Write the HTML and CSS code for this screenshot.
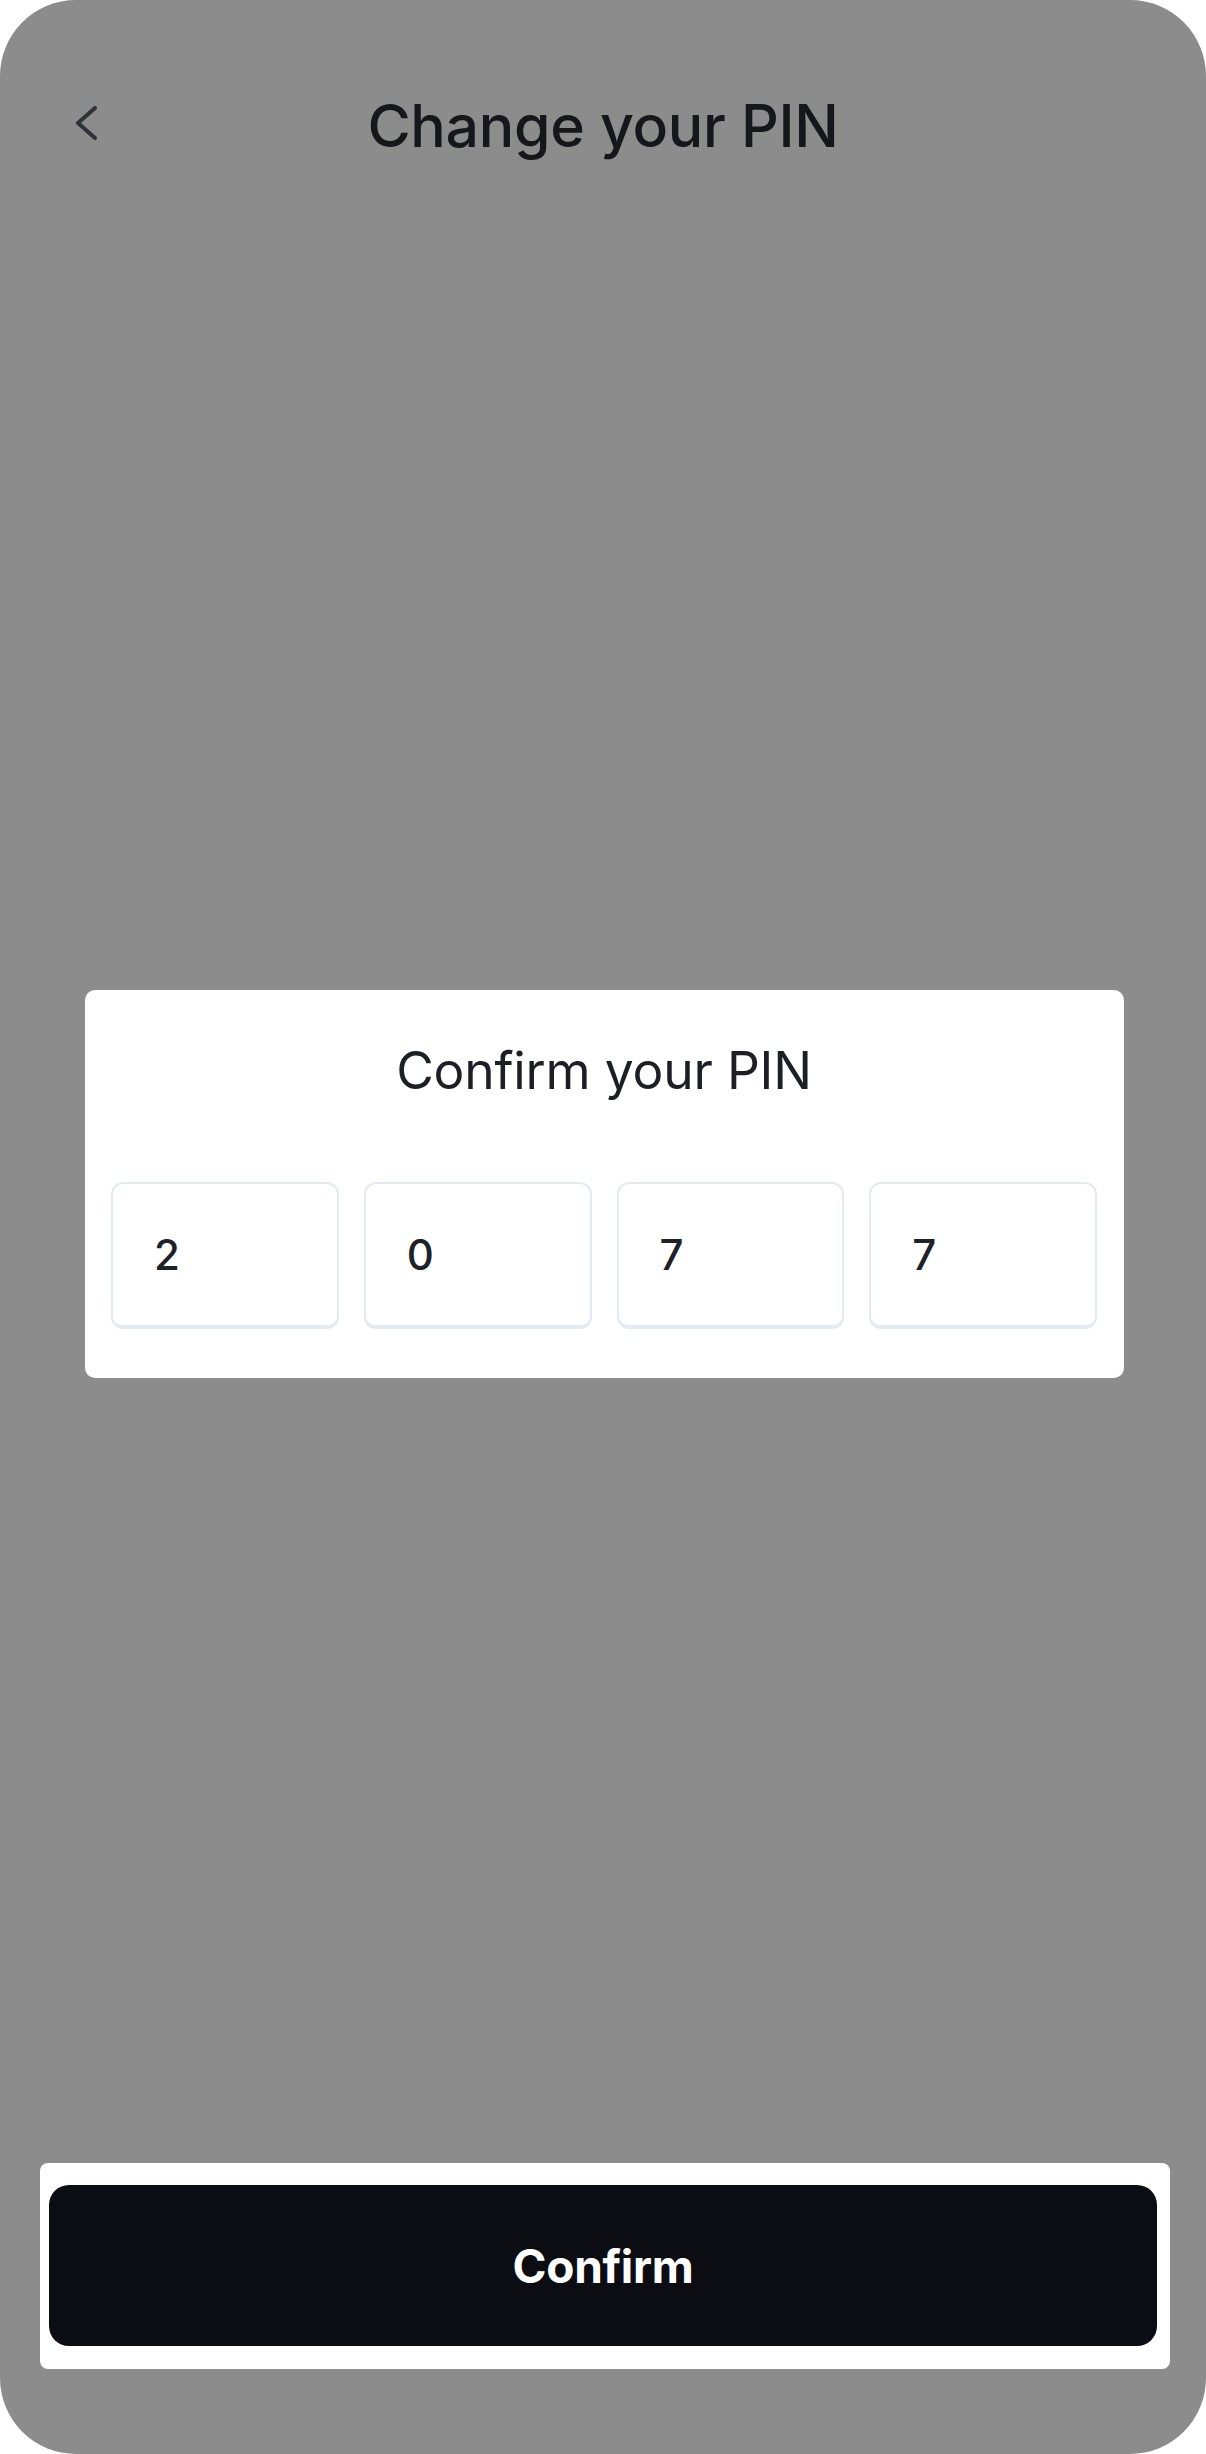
FILE: index.html
```html
<!DOCTYPE html>
<html lang="en">
<head>
<meta charset="utf-8">
<title>Change your PIN</title>
<link rel="stylesheet" href="styles.css">
</head>
<body>
<div class="screen">
  <header class="header">
    <div class="back">
      <svg class="back-icon" width="22" height="34" viewBox="0 0 22 34" aria-hidden="true">
        <polyline points="19,2 2,17 19,32" fill="none" stroke="#2f3337" stroke-width="4" stroke-linecap="round" stroke-linejoin="round"/>
      </svg>
    </div>
    <h1 class="title">Change your PIN</h1>
    <div></div>
  </header>

  <section class="card">
    <h2 class="card-title">Confirm your PIN</h2>
    <div class="pin-row">
      <div class="pin-box">2</div>
      <div class="pin-box">0</div>
      <div class="pin-box">7</div>
      <div class="pin-box">7</div>
    </div>
  </section>

  <footer class="footer">
    <button class="confirm-btn" type="button">Confirm</button>
  </footer>
</div>
</body>
</html>
```

FILE: styles.css
```css
html, body {
  margin: 0;
  padding: 0;
  background: #ffffff;
}

body {
  font-family: Inter, "Noto Sans", "Liberation Sans", sans-serif;
}

.screen {
  width: 1206px;
  height: 2454px;
  background: #8c8c8c;
  border-radius: 76px;
  display: flex;
  flex-direction: column;
  overflow: hidden;
}

.header {
  display: grid;
  grid-template-columns: 1fr auto 1fr;
  align-items: start;
  padding-top: 89px;
}

.back {
  padding-left: 76px;
  padding-top: 17px;
}

.back-icon {
  display: block;
}

.title {
  margin: 0;
  font-size: 59px;
  font-weight: 500;
  line-height: 73px;
  color: #15171b;
  letter-spacing: -0.3px;
  white-space: nowrap;
}

.card {
  margin: 828px 82px 0 85px;
  background: #ffffff;
  border-radius: 10px;
  padding: 49px 27px 49px 26px;
}

.card-title {
  margin: 0;
  text-align: center;
  font-size: 51.5px;
  font-weight: 400;
  line-height: 62px;
  color: #1c1f24;
  letter-spacing: -0.2px;
}

.pin-row {
  margin-top: 81px;
  display: grid;
  grid-template-columns: repeat(4, 1fr);
  gap: 25px;
}

.pin-box {
  height: 147px;
  box-sizing: border-box;
  border: 2.5px solid #e4eaf1;
  border-bottom-width: 4px;
  border-radius: 12px;
  display: flex;
  align-items: center;
  padding-left: 41px;
  font-size: 42px;
  font-weight: 500;
  color: #1d2128;
}

.footer {
  margin: auto 36px 85px 40px;
  background: #ffffff;
  border-radius: 8px;
  padding: 22px 13px 23px 9px;
}

.confirm-btn {
  display: block;
  width: 100%;
  height: 161px;
  border: none;
  border-radius: 20px;
  background: #0b0d12;
  color: #ffffff;
  font-family: Inter, "Noto Sans", "Liberation Sans", sans-serif;
  font-size: 46px;
  font-weight: 700;
  letter-spacing: -0.3px;
  padding: 0;
}
```
